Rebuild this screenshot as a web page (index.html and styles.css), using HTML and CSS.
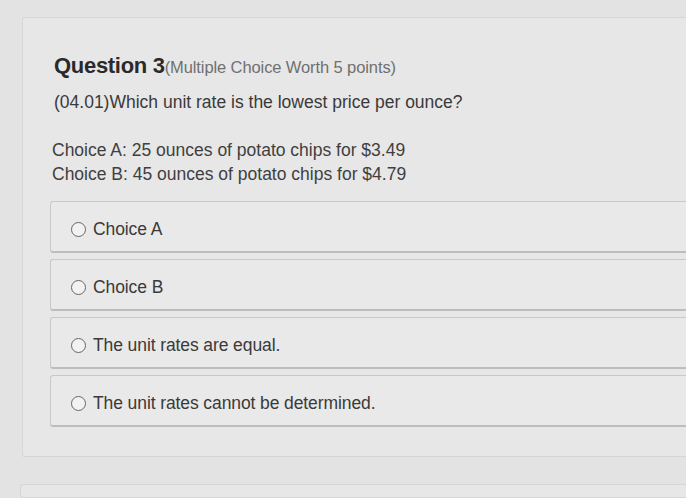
FILE: index.html
```html
<!DOCTYPE html>
<html>
<head>
<meta charset="utf-8">
<link rel="stylesheet" href="styles.css">
</head>
<body>
<div class="page">
  <section class="card">
    <h2 class="title">Question 3<span class="meta">(Multiple Choice Worth 5 points)</span></h2>
    <p class="prompt">(04.01)Which unit rate is the lowest price per ounce?</p>
    <div class="givens">
      <p>Choice A: 25 ounces of potato chips for $3.49</p>
      <p>Choice B: 45 ounces of potato chips for $4.79</p>
    </div>
    <ul class="options">
      <li class="option"><span class="radio"></span>Choice A</li>
      <li class="option"><span class="radio"></span>Choice B</li>
      <li class="option"><span class="radio"></span>The unit rates are equal.</li>
      <li class="option"><span class="radio"></span>The unit rates cannot be determined.</li>
    </ul>
  </section>
  <section class="card next"></section>
</div>
</body>
</html>
```
FILE: styles.css
```css
html, body {
  margin: 0;
  padding: 0;
}
body {
  width: 686px;
  height: 498px;
  overflow: hidden;
  background: #e3e3e3;
  font-family: "Liberation Sans", Arial, sans-serif;
  color: #333;
}
.page {
  padding: 17px 0 0 22px;
  display: flex;
  flex-direction: column;
  gap: 27px;
}
.card {
  background: #e7e7e7;
  border: 1px solid #d6d6d6;
  border-right: none;
  border-radius: 3px 0 0 3px;
  padding: 35px 0 29px 31px;
}
.card.next {
  padding: 0;
  height: 12px;
  margin-left: -2px;
}
.title {
  margin: 0;
  font-size: 22px;
  font-weight: bold;
  color: #2a2a2a;
  line-height: 26px;
  letter-spacing: -0.3px;
}
.meta {
  font-size: 16.5px;
  font-weight: normal;
  color: #707070;
  letter-spacing: -0.1px;
}
.prompt {
  margin: 11px 0 0 0;
  font-size: 17.5px;
  line-height: 22px;
  color: #3a3a3a;
}
.givens {
  margin-top: 25px;
}
.givens p {
  margin: 0 0 0 -2px;
  font-size: 17.5px;
  line-height: 24px;
  color: #3f3f3f;
}
.options {
  list-style: none;
  margin: 15px 0 0 -4px;
  padding: 0;
  display: flex;
  flex-direction: column;
  gap: 6px;
}
.option {
  box-sizing: border-box;
  height: 52px;
  display: flex;
  align-items: center;
  gap: 7px;
  padding: 5px 0 0 20px;
  background: #e9e9e9;
  border: 1px solid #c9c9c9;
  border-right: none;
  border-bottom: 2px solid #bdbdbd;
  border-radius: 3px 0 0 3px;
  font-size: 17.5px;
  color: #3a3a3a;
  letter-spacing: -0.1px;
}
.radio {
  width: 15px;
  height: 15px;
  border: 1.5px solid #666;
  border-radius: 50%;
  background: #f2f2f2;
  box-sizing: border-box;
  flex: none;
}
```
